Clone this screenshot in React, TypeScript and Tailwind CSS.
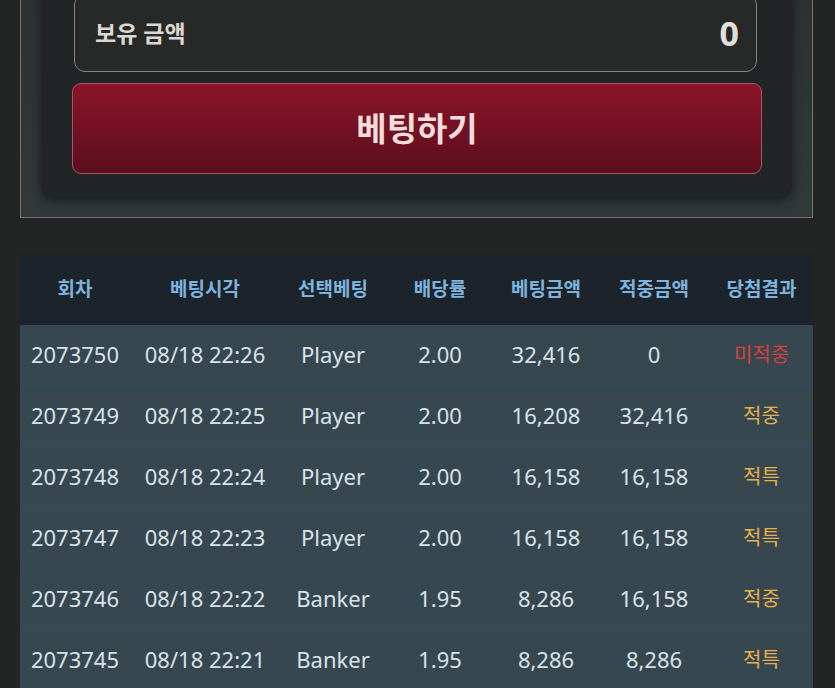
import React from "react";

type Row = {
  round: string;
  time: string;
  pick: string;
  odds: string;
  bet: string;
  win: string;
  result: "미적중" | "적중" | "적특";
};

const rows: Row[] = [
  { round: "2073750", time: "08/18 22:26", pick: "Player", odds: "2.00", bet: "32,416", win: "0", result: "미적중" },
  { round: "2073749", time: "08/18 22:25", pick: "Player", odds: "2.00", bet: "16,208", win: "32,416", result: "적중" },
  { round: "2073748", time: "08/18 22:24", pick: "Player", odds: "2.00", bet: "16,158", win: "16,158", result: "적특" },
  { round: "2073747", time: "08/18 22:23", pick: "Player", odds: "2.00", bet: "16,158", win: "16,158", result: "적특" },
  { round: "2073746", time: "08/18 22:22", pick: "Banker", odds: "1.95", bet: "8,286", win: "16,158", result: "적중" },
  { round: "2073745", time: "08/18 22:21", pick: "Banker", odds: "1.95", bet: "8,286", win: "8,286", result: "적특" },
];

const headers = ["회차", "베팅시각", "선택베팅", "배당률", "베팅금액", "적중금액", "당첨결과"];

const cols = "grid grid-cols-[110px_150px_106px_108px_104px_112px_1fr] items-center text-center";

export default function App() {
  return (
    <div
      className="h-[688px] overflow-hidden bg-[#232424]"
      style={{ fontFamily: '"Noto Sans", "Noto Sans CJK KR", sans-serif' }}
    >
      {/* bet panel */}
      <div className="mx-[20px] mr-[22px] -mt-[30px] border border-[#77776f] bg-gradient-to-b from-[#2b3133] to-[#30383a] px-[20px] pb-[20px] pt-[10px]">
        <div className="rounded-[12px] bg-[#222525] pb-[23px] pl-[31px] pr-[30px] pt-[13px] shadow-[0_4px_10px_rgba(0,0,0,0.45)]">
          <div className="ml-[2px] mr-[5px] flex h-[78px] items-center justify-between rounded-[11px] border border-[#85857e] bg-[#272828] pl-[20px] pr-[17px]">
            <span className="text-[23px] font-bold text-[#ddd8cf]">보유 금액</span>
            <span className="text-[34px] font-bold text-[#e2ded6]">0</span>
          </div>
          <button className="mt-[11px] flex h-[91px] w-full items-center justify-center rounded-[9px] border border-[#a3586a] bg-gradient-to-b from-[#8c1429] to-[#5b0e1d] text-[33px] font-bold text-[#f2dcdc]">
            베팅하기
          </button>
        </div>
      </div>

      {/* history table */}
      <div className="mx-[20px] mr-[22px] mt-[36px]">
        <div className={`${cols} h-[71px] bg-[#1c232a] text-[19px] font-bold text-[#7db4df]`}>
          {headers.map((h) => (
            <div key={h}>{h}</div>
          ))}
        </div>
        {rows.map((r) => (
          <div
            key={r.round}
            className={`${cols} h-[61px] border-b-2 border-[#2f4b59] bg-[#37474f] text-[22px] text-[#d7e2e9]`}
          >
            <div>{r.round}</div>
            <div>{r.time}</div>
            <div>{r.pick}</div>
            <div>{r.odds}</div>
            <div>{r.bet}</div>
            <div>{r.win}</div>
            <div
              className={
                r.result === "미적중"
                  ? "text-[20px] text-[#d8403f]"
                  : "text-[20px] text-[#e6b04c]"
              }
            >
              {r.result}
            </div>
          </div>
        ))}
      </div>
    </div>
  );
}
